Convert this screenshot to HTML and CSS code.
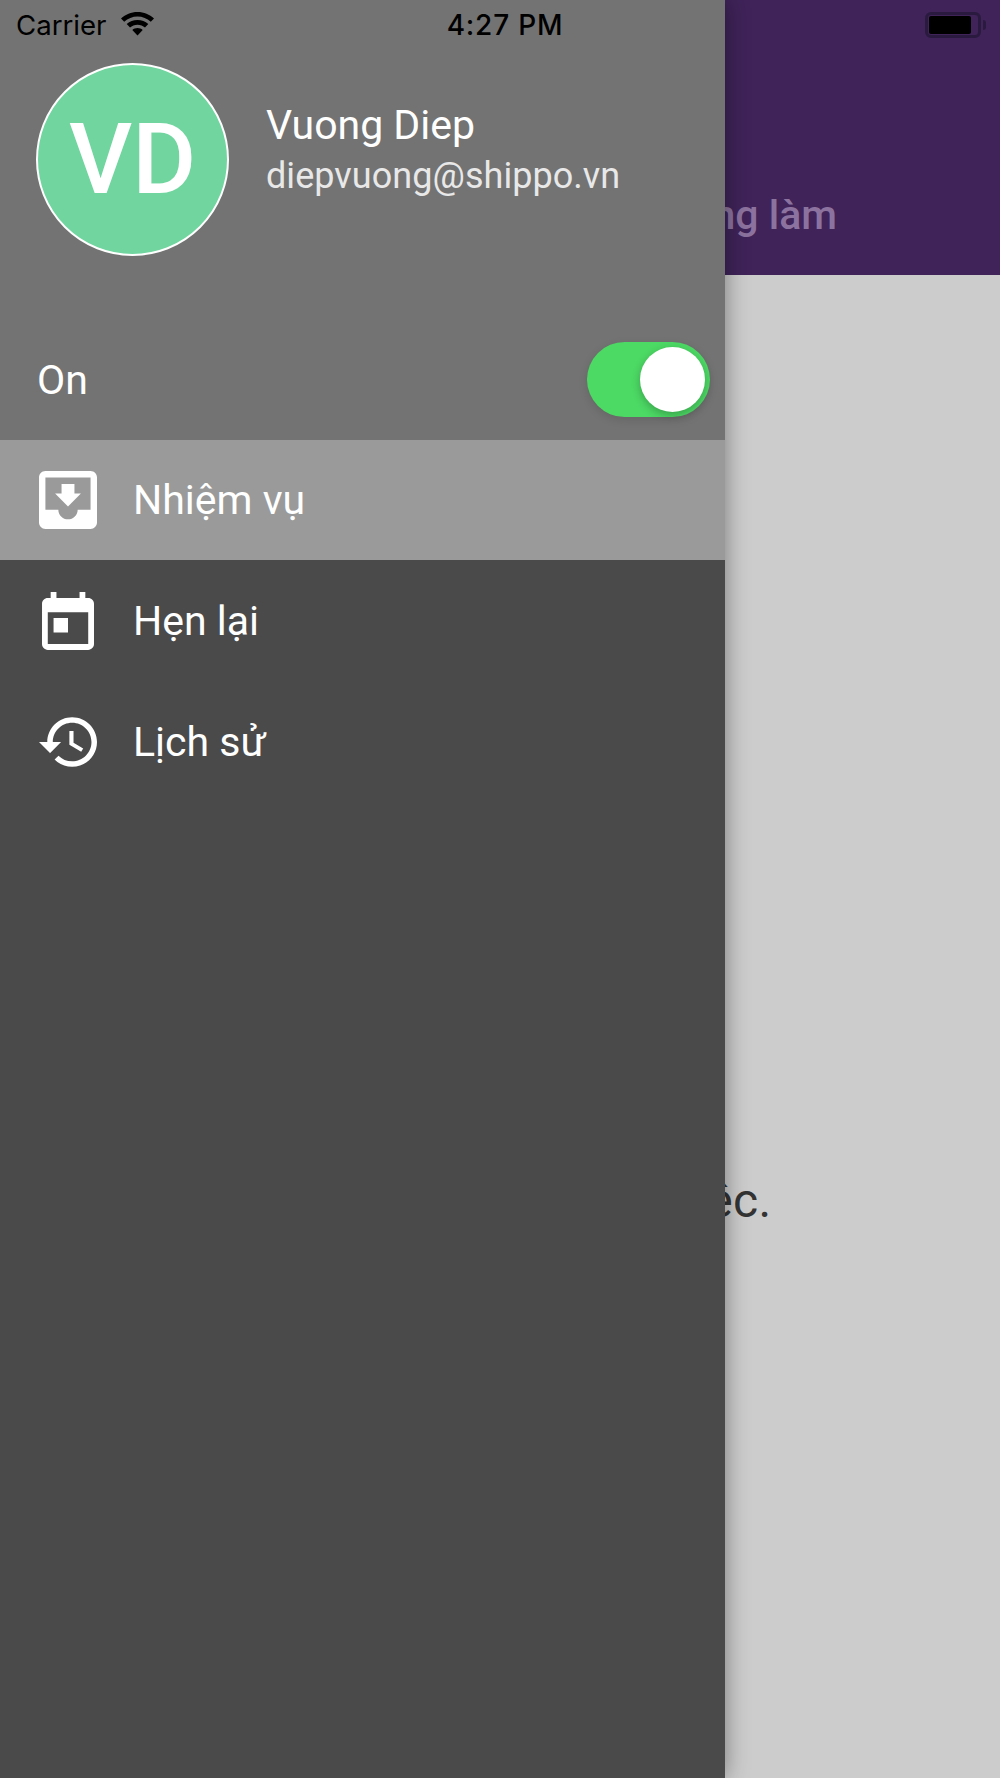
FILE: index.html
```html
<!DOCTYPE html>
<html lang="vi">
<head>
  <meta charset="UTF-8" />
  <meta name="viewport" content="width=device-width, initial-scale=1.0"/>
  <title>Shippo</title>
  <link rel="stylesheet" href="styles.css">
</head>
<body>

  <div class="screen">
    <div class="appbar">
      <div class="tabs">
        <div class="tab"></div>
        <div class="tab">Đang làm</div>
      </div>
    </div>
    <div class="content">
      <p class="empty">Hiện không có công việc.</p>
    </div>

    <div class="drawer">
      <div class="drawer-head">
        <div class="profile">
          <div class="avatar">VD</div>
          <div class="who">
            <div class="name">Vuong Diep</div>
            <div class="email">diepvuong@shippo.vn</div>
          </div>
        </div>
        <div class="status-row">
          <span class="status-label">On</span>
          <div class="switch"><div class="knob"></div></div>
        </div>
      </div>

      <div class="menu-item active">
        <div class="icon-slot">
          <svg width="58" height="58" viewBox="3 3 18 18"><path d="M19 3H4.99c-1.11 0-1.98.9-1.98 2L3 19c0 1.1.88 2 1.99 2H19c1.1 0 2-.9 2-2V5c0-1.1-.9-2-2-2zm0 12h-4c0 1.66-1.35 3-3 3s-3-1.34-3-3H4.99V5H19v10zm-3-5h-2V7h-4v3H8l4 4 4-4z"/></svg>
        </div>
        <span>Nhiệm vụ</span>
      </div>
      <div class="menu-item">
        <div class="icon-slot">
          <svg width="52" height="58" viewBox="3 1 18 20"><path d="M19 3h-1V1h-2v2H8V1H6v2H5c-1.11 0-1.99.9-1.99 2L3 19c0 1.1.89 2 2 2h14c1.1 0 2-.9 2-2V5c0-1.1-.9-2-2-2zm0 16H5V8h14v11zM7 10h5v5H7z"/></svg>
        </div>
        <span>Hẹn lại</span>
      </div>
      <div class="menu-item">
        <div class="icon-slot">
          <svg width="58" height="50" viewBox="1 3 21 18"><path d="M13 3c-4.97 0-9 4.03-9 9H1l3.89 3.89.07.14L9 12H6c0-3.87 3.13-7 7-7s7 3.13 7 7-3.13 7-7 7c-1.93 0-3.68-.79-4.94-2.06l-1.42 1.42C8.27 19.99 10.51 21 13 21c4.97 0 9-4.03 9-9s-4.03-9-9-9zm-1 5v5l4.28 2.54.72-1.21-3.5-2.08V8H12z"/></svg>
        </div>
        <span>Lịch sử</span>
      </div>
    </div>

    <div class="statusbar">
      <div class="carrier">
        <span>Carrier</span>
        <svg width="33" height="24" viewBox="0 0 33 24"><path d="M16.500 0C10 0 4.500 2.400 0 6.500l3.200 3.300C6.900 6.500 11.500 4.500 16.500 4.500s9.600 2 13.300 5.300L33 6.500C28.500 2.400 23 0 16.500 0z"/><path d="M16.500 8C12.300 8 8.700 9.500 5.700 12.100l3.300 3.400c2-1.700 4.600-2.800 7.500-2.800s5.500 1.100 7.500 2.800l3.300-3.400C24.300 9.500 20.700 8 16.500 8z"/><path d="M16.500 16c-2 0-3.800.7-5.200 1.900l5.200 5.600 5.200-5.600C20.300 16.700 18.500 16 16.500 16z"/></svg>
      </div>
      <div class="clock">4:27 PM</div>
      <div class="battery"><div class="battery-fill"></div></div>
    </div>
  </div>

</body>
</html>
```

FILE: styles.css
```css
* {
  margin: 0; padding: 0; box-sizing: border-box;
}
body {
  font-family: 'Roboto', sans-serif;
  background: #cccccc;
  overflow: hidden;
}
.screen {
  position: relative;
  height: 1778px;
  overflow: hidden;
}
.appbar {
  height: 275px;
  background: #3f2359;
  display: flex;
  align-items: flex-end;
}
.tabs {
  width: 100%;
  display: grid;
  grid-template-columns: 1fr 1fr;
  padding-bottom: 38px;
}
.tab {
  text-align: center;
  font-size: 41px;
  font-weight: 500;
  line-height: 44px;
  color: #8c739f;
}
.content {
  height: 1503px;
  display: flex;
  justify-content: center;
  padding-top: 898px;
}
.empty {
  font-size: 48px;
  line-height: 56px;
  letter-spacing: 0.4px;
  color: #333333;
}

/* drawer lies over the screen */
.drawer {
  position: absolute;
  top: 0;
  left: 0;
  bottom: 0;
  width: 725px;
  background: #4a4a4a;
  color: #fff;
  box-shadow: 0 0 22px rgba(0,0,0,0.4);
}
.drawer-head {
  height: 440px;
  background: #737373;
  padding: 63px 15px 0 36px;
}
.profile {
  display: flex;
  align-items: center;
  gap: 37px;
}
.avatar {
  width: 193px;
  height: 193px;
  flex-shrink: 0;
  border-radius: 50%;
  border: 2px solid #fff;
  background: #70d59f;
  display: flex;
  align-items: center;
  justify-content: center;
  font-size: 98px;
  font-weight: 500;
}
.who {
  padding-bottom: 17px;
}
.name {
  font-size: 41px;
  line-height: 50px;
}
.email {
  font-size: 36px;
  line-height: 52px;
  letter-spacing: 0.05px;
  color: #e8e8e8;
}
.status-row {
  display: flex;
  align-items: center;
  justify-content: space-between;
  margin-top: 86px;
}
.status-label {
  font-size: 41px;
  margin-left: 1px;
}
.switch {
  width: 123px;
  height: 75px;
  border-radius: 38px;
  background: #4cd964;
  padding: 5px;
  display: flex;
  justify-content: flex-end;
  box-shadow: 0 3px 10px rgba(0,0,0,0.12);
}
.knob {
  width: 65px;
  height: 65px;
  border-radius: 50%;
  background: #fff;
  box-shadow: 0 3px 8px rgba(0,0,0,0.25);
}
.menu-item {
  height: 121px;
  display: flex;
  align-items: center;
  gap: 36px;
  padding-left: 39px;
  font-size: 41px;
}
.menu-item.active {
  height: 120px;
  background: #9a9a9a;
}
.icon-slot {
  width: 58px;
  display: flex;
  justify-content: center;
}
.icon-slot svg {
  display: block;
  fill: #fff;
}

.statusbar {
  position: absolute;
  top: 0;
  left: 0;
  right: 0;
  display: grid;
  grid-template-columns: 1fr auto 1fr;
  align-items: center;
  height: 50px;
  padding: 0 6px 0 16px;
  font-family: 'Inter', sans-serif;
  font-size: 27.6px;
  color: #000;
}
.carrier {
  display: flex;
  align-items: center;
  gap: 15px;
}
.carrier svg {
  fill: #000;
  margin-top: -3px;
}
.clock {
  font-size: 28px;
  font-weight: 500;
  letter-spacing: 0.8px;
}
.battery {
  justify-self: end;
  margin-right: 13px;
  margin-top: -1px;
  width: 56px;
  height: 26px;
  border: 3px solid #2b1a3f;
  border-radius: 6px;
  padding: 1px 7px 1px 1px;
  position: relative;
}
.battery::after {
  content: "";
  position: absolute;
  right: -8px;
  top: 5px;
  width: 3px;
  height: 10px;
  background: #2b1a3f;
  border-radius: 0 3px 3px 0;
}
.battery-fill {
  height: 100%;
  background: #000;
  border-radius: 2px;
}
```
